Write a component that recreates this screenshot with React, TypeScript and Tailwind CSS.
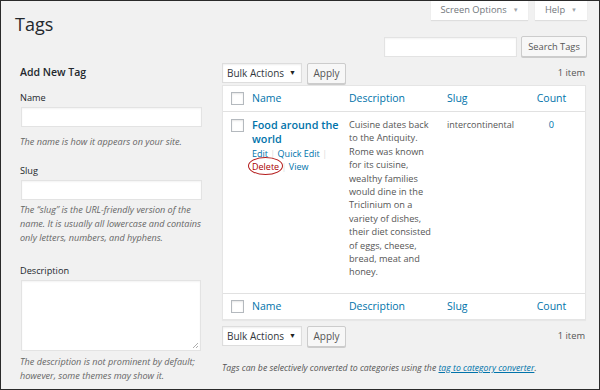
const FONT = { fontFamily: '"Open Sans", "Liberation Sans", sans-serif' };

function Checkbox() {
  return <span className="block w-[13px] h-[13px] bg-white border border-[#b4b9be] shadow-[inset_0_1px_2px_rgba(0,0,0,0.1)]" />;
}

function HeaderRow({ top }: { top?: boolean }) {
  return (
    <div className={"flex items-center h-[26px] text-[10.5px] text-[#0073aa] " + (top ? "border-b border-[#e1e1e1]" : "border-t border-[#e1e1e1]")}>
      <div className="w-[22px] flex justify-end pr-[1px]"><Checkbox /></div>
      <div className="w-[97px] pl-[7px]">Name</div>
      <div className="w-[98px] pl-[7px]">Description</div>
      <div className="w-[78px] pl-[7px]">Slug</div>
      <div className="flex-1 text-center">Count</div>
    </div>
  );
}

function TableNav() {
  return (
    <div className="flex items-center h-[20px]">
      <div className="flex items-center justify-between w-[80px] h-[20px] bg-white border border-[#ddd] pl-[4px] pr-[5px] text-[10px] text-[#32373c] whitespace-nowrap shadow-[inset_0_1px_2px_rgba(0,0,0,0.07)]">
        <span>Bulk Actions</span>
        <span className="text-[7px] text-[#222]">▼</span>
      </div>
      <div className="ml-[5px] w-[39px] h-[21px] flex items-center justify-center bg-[#f7f7f7] border border-[#ccc] rounded-[2px] text-[10px] text-[#555] shadow-[0_1px_0_#ccc]">Apply</div>
      <div className="ml-auto pr-[1px] text-[9.3px] text-[#555]">1 item</div>
    </div>
  );
}

export default function App() {
  const desc = [
    "Cuisine dates back",
    "to the Antiquity.",
    "Rome was known",
    "for its cuisine,",
    "wealthy families",
    "would dine in the",
    "Triclinium on a",
    "variety of dishes,",
    "their diet consisted",
    "of eggs, cheese,",
    "bread, meat and",
    "honey.",
  ];
  return (
    <div className="w-[600px] h-[390px] bg-[#f1f1f1] border border-[#2a2a2a] overflow-hidden text-[#23282d]" style={FONT}>
      {/* Header */}
      <div className="flex h-[62px]">
        <div className="pl-[14px] pt-[9px] text-[18px] leading-[28px] font-normal text-[#23282d]">Tags</div>
        <div className="ml-auto flex flex-col items-end pr-[12px]">
          <div className="flex gap-[7px] -mt-[1px]">
            <div className="w-[97px] h-[20px] bg-white shadow-[0_1px_1px_rgba(0,0,0,0.08)] flex items-center justify-center gap-[6px] text-[9.3px] text-[#72777c]">
              Screen Options <span className="text-[6px] text-[#a0a5aa]">▼</span>
            </div>
            <div className="w-[52px] h-[20px] bg-white shadow-[0_1px_1px_rgba(0,0,0,0.08)] flex items-center justify-center gap-[6px] text-[9.3px] text-[#72777c]">
              Help <span className="text-[6px] text-[#a0a5aa]">▼</span>
            </div>
          </div>
          <div className="flex items-center mt-[16px]">
            <div className="w-[133px] h-[20px] bg-white border border-[#e3e3e3] shadow-[inset_0_1px_2px_rgba(0,0,0,0.05)]" />
            <div className="ml-[4px] w-[66px] h-[21px] flex items-center justify-center bg-[#f7f7f7] border border-[#ccc] rounded-[2px] text-[9.3px] text-[#555] shadow-[0_1px_0_#ccc]">Search Tags</div>
          </div>
        </div>
      </div>

      <div className="flex pl-[19px] pr-[13px]">
        {/* Left column: form */}
        <div className="w-[182px]">
          <div className="text-[10.5px] leading-[18px] font-semibold text-[#23282d]">Add New Tag</div>
          <div className="mt-[10px] text-[9.2px] leading-[14px] text-[#23282d]">Name</div>
          <div className="mt-[2px] ml-[1px] h-[20px] bg-white border border-[#e3e3e3] shadow-[inset_0_1px_2px_rgba(0,0,0,0.05)]" />
          <div className="mt-[8px] text-[9.1px] leading-[14px] italic text-[#666]">The name is how it appears on your site.</div>
          <div className="mt-[15px] text-[9.2px] leading-[14px] text-[#23282d]">Slug</div>
          <div className="mt-[2px] ml-[1px] h-[20px] bg-white border border-[#e3e3e3] shadow-[inset_0_1px_2px_rgba(0,0,0,0.05)]" />
          <div className="mt-[3px] text-[9.1px] leading-[14px] italic text-[#666]">
            The “slug” is the URL-friendly version of the name. It is usually all lowercase and contains only letters, numbers, and hyphens.
          </div>
          <div className="mt-[19px] text-[9.2px] leading-[14px] text-[#23282d]">Description</div>
          <div className="relative mt-[2px] ml-[1px] w-[180px] h-[71px] bg-white border border-[#e3e3e3] shadow-[inset_0_1px_2px_rgba(0,0,0,0.05)]">
            <svg className="absolute right-[2px] bottom-[2px]" width="6" height="6" viewBox="0 0 6 6">
              <path d="M1 6 L6 1 M4 6 L6 4" stroke="#999" strokeWidth="0.8" />
            </svg>
          </div>
          <div className="mt-[4px] text-[9.1px] leading-[14px] italic text-[#666]">
            The description is not prominent by default; however, some themes may show it.
          </div>
        </div>

        {/* Right column: table */}
        <div className="ml-[20px] flex-1">
          <TableNav />
          <div className="mt-[2px] bg-white border border-[#e5e5e5] shadow-[0_1px_1px_rgba(0,0,0,0.04)]">
            <HeaderRow top />
            <div className="flex h-[181px] pt-[6px]">
              <div className="w-[22px] flex justify-end pr-[1px]"><div className="pt-[1px]"><Checkbox /></div></div>
              <div className="w-[97px] pl-[7px]">
                <div className="text-[10.8px] leading-[14px] font-semibold text-[#0073aa] whitespace-nowrap">
                  Food around the
                  <br />
                  world
                </div>
                <div className="mt-[1px] text-[9px] leading-[13px] text-[#0073aa] whitespace-nowrap">
                  Edit <span className="text-[#ddd]">|</span> Quick Edit <span className="text-[#ddd]">|</span>
                </div>
                <div className="text-[9px] leading-[13px] text-[#0073aa] whitespace-nowrap">
                  <span className="relative text-[#a00]">
                    Delete
                    <span className="absolute -left-[4px] -right-[4px] -top-[3px] -bottom-[2px] border-[1.5px] border-[#b41c1c] rounded-[50%]" />
                  </span>{" "}
                  <span className="text-[#ddd]">|</span> View
                </div>
              </div>
              <div className="w-[98px] pl-[7px] text-[9.2px] leading-[13.4px] text-[#555]">
                {desc.map((l) => (
                  <div key={l} className="whitespace-nowrap">{l}</div>
                ))}
              </div>
              <div className="w-[78px] pl-[7px] text-[9px] leading-[13px] text-[#555]">intercontinental</div>
              <div className="flex-1 text-center text-[9.2px] leading-[13px] text-[#0073aa]">0</div>
            </div>
            <HeaderRow />
          </div>
          <div className="mt-[6px]"><TableNav /></div>
          <div className="mt-[15px] text-[8.7px] leading-[14px] italic text-[#555] whitespace-nowrap">
            Tags can be selectively converted to categories using the{" "}
            <span className="text-[#0073aa] underline">tag to category converter</span>.
          </div>
        </div>
      </div>
    </div>
  );
}
